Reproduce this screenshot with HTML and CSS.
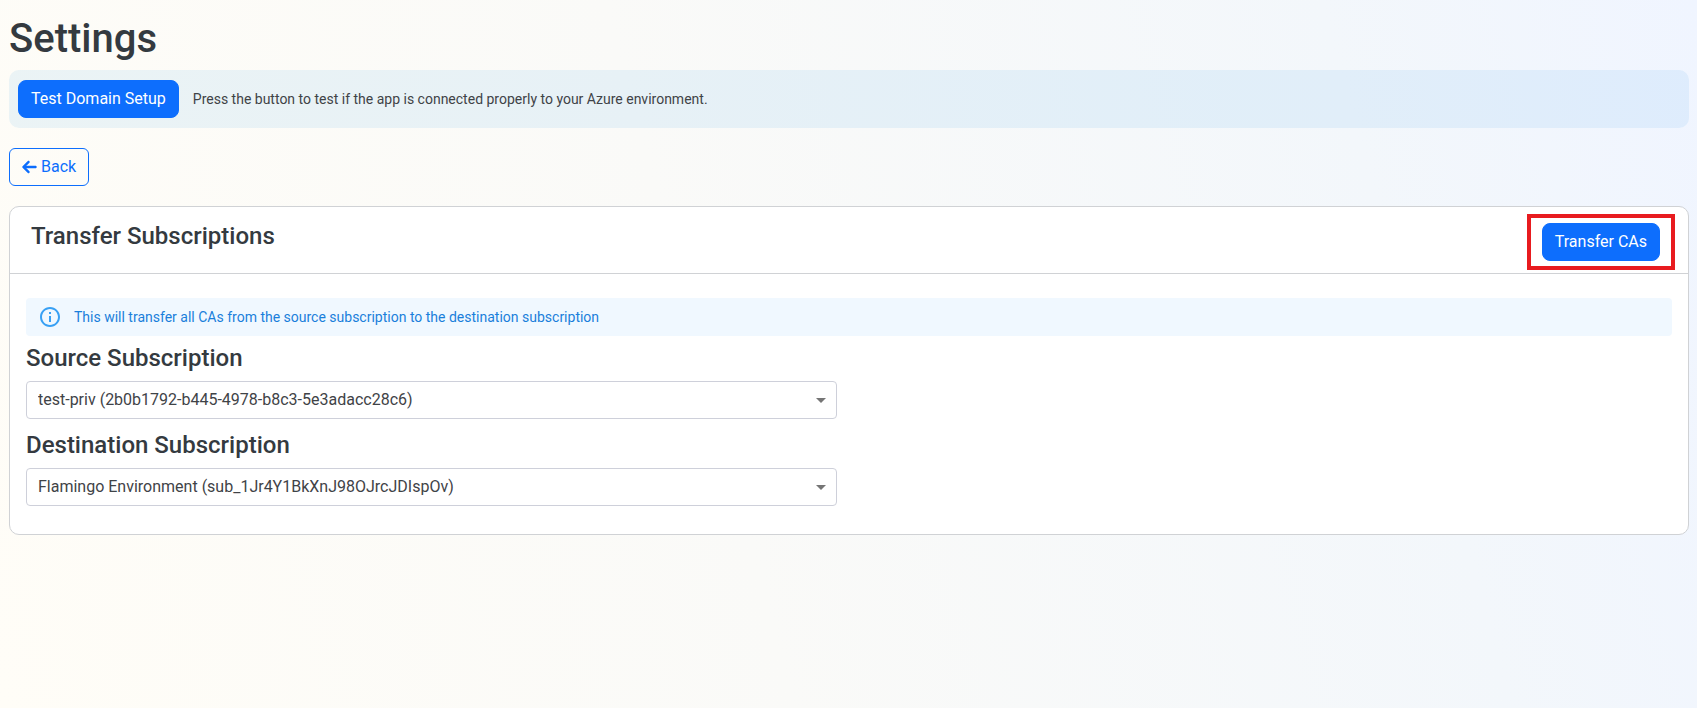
FILE: index.html
```html
<!DOCTYPE html>
<html lang="en">
<head>
<meta charset="utf-8">
<meta name="viewport" content="width=device-width, initial-scale=1">
<title>Settings</title>
<link rel="stylesheet" href="styles.css">
</head>
<body>
<main class="page">
  <h1 class="page-title">Settings</h1>
  <section class="notice">
    <button class="btn btn-primary" type="button">Test Domain Setup</button>
    <p class="notice-text">Press the button to test if the app is connected properly to your Azure environment.</p>
  </section>
  <button class="btn btn-outline" type="button">
    <svg class="back-icon" viewBox="0 0 448 512" aria-hidden="true"><path stroke="currentColor" stroke-width="16" d="M9.4 233.400c-12.500 12.500-12.500 32.800 0 45.300l160 160c12.500 12.500 32.800 12.500 45.300 0s12.500-32.800 0-45.300L109.200 288H416c17.700 0 32-14.300 32-32s-14.300-32-32-32H109.200l105.500-105.400c12.500-12.500 12.500-32.800 0-45.300s-32.800-12.500-45.300 0l-160 160z"/></svg>
    Back
  </button>
  <section class="card">
    <header class="card-header">
      <h2 class="heading">Transfer Subscriptions</h2>
      <div class="highlight">
        <button class="btn btn-primary" type="button">Transfer CAs</button>
      </div>
    </header>
    <div class="card-body">
      <div class="info" role="status">
        <svg class="info-icon" viewBox="0 0 24 24" aria-hidden="true"><path d="M11 7h2v2h-2zm0 4h2v6h-2zm1-9C6.480 2 2 6.480 2 12s4.480 10 10 10 10-4.480 10-10S17.520 2 12 2zm0 18c-4.410 0-8-3.590-8-8s3.590-8 8-8 8 3.590 8 8-3.590 8-8 8z"/></svg>
        <p class="info-text">This will transfer all CAs from the source subscription to the destination subscription</p>
      </div>
      <div class="fields">
        <div class="field">
          <label class="heading" for="source">Source Subscription</label>
          <div class="select-wrap">
            <select class="select" id="source"><option>test-priv (2b0b1792-b445-4978-b8c3-5e3adacc28c6)</option></select>
          </div>
        </div>
        <div class="field">
          <label class="heading" for="destination">Destination Subscription</label>
          <div class="select-wrap">
            <select class="select" id="destination"><option>Flamingo Environment (sub_1Jr4Y1BkXnJ98OJrcJDIspOv)</option></select>
          </div>
        </div>
      </div>
    </div>
  </section>
</main>
</body>
</html>
```
FILE: styles.css
```css
* {
  box-sizing: border-box;
}

body {
  margin: 0;
  min-height: 100vh;
  background: linear-gradient(75deg, #fffdf7 0%, #fafaf8 42%, #f3f7fb 80%, #f0f5ff 100%);
  color: #3f4347;
  font-family: Roboto, "Liberation Sans", sans-serif;
  font-size: 16px;
  line-height: 24px;
}

h1,
h2,
p {
  margin: 0;
}

.page {
  padding: 15px 8px 15px 9px;
}

.page-title {
  margin-bottom: 7px;
  color: #343a40;
  font-size: 40px;
  font-weight: 500;
  line-height: 48px;
}

.heading {
  color: #343a40;
  font-size: 24px;
  font-weight: 500;
  line-height: 29px;
}

.btn {
  display: inline-flex;
  align-items: center;
  height: 38px;
  padding: 0 12px;
  border: 1px solid #0d6efd;
  border-radius: 6px;
  font: inherit;
  white-space: nowrap;
  cursor: pointer;
}

.btn-primary {
  border-radius: 8px;
  background: #0d6efd;
  color: #fff;
}

.btn-outline {
  gap: 4px;
  margin: 20px 0;
  background: transparent;
  color: #0d6efd;
}

.back-icon {
  width: 15px;
  height: 16px;
  fill: currentColor;
}

.notice {
  display: flex;
  align-items: center;
  gap: 14px;
  padding: 10px 9px;
  border-radius: 10px;
  background: rgba(13, 140, 235, 0.08);
}

.notice-text {
  font-size: 14px;
}

.card {
  border: 1px solid #d0d2d5;
  border-radius: 10px;
  background: #fff;
}

.card-header {
  display: flex;
  align-items: flex-start;
  justify-content: space-between;
  padding: 7px 13px 3px 21px;
  border-bottom: 1px solid #d0d2d5;
}

.card-header .heading {
  padding-top: 8px;
}

.highlight {
  display: flex;
  padding: 5px 11px;
  border: 4px solid #e81b1f;
}

.card-body {
  padding: 24px 16px 28px;
}

.info {
  display: flex;
  align-items: center;
  gap: 12px;
  min-height: 38px;
  padding: 0 12px;
  border-radius: 4px;
  background: #f0f8ff;
  color: #1a7fdb;
}

.info-icon {
  width: 24px;
  height: 24px;
  fill: #38a0f4;
}

.info-text {
  font-size: 14px;
}

.fields {
  display: grid;
  gap: 12px;
  width: calc(50% - 12px);
  padding-top: 8px;
}

.field {
  display: grid;
  gap: 8px;
}

.select-wrap {
  position: relative;
}

.select-wrap::after {
  content: "";
  position: absolute;
  top: 17px;
  right: 11px;
  border: 5px solid transparent;
  border-top-color: #757575;
  border-bottom: 0;
  pointer-events: none;
}

.select {
  display: block;
  width: 100%;
  height: 38px;
  padding: 0 32px 0 11px;
  border: 1px solid #ced0da;
  border-radius: 4px;
  appearance: none;
  background: #fff;
  color: #3f4347;
  font: inherit;
}
```
